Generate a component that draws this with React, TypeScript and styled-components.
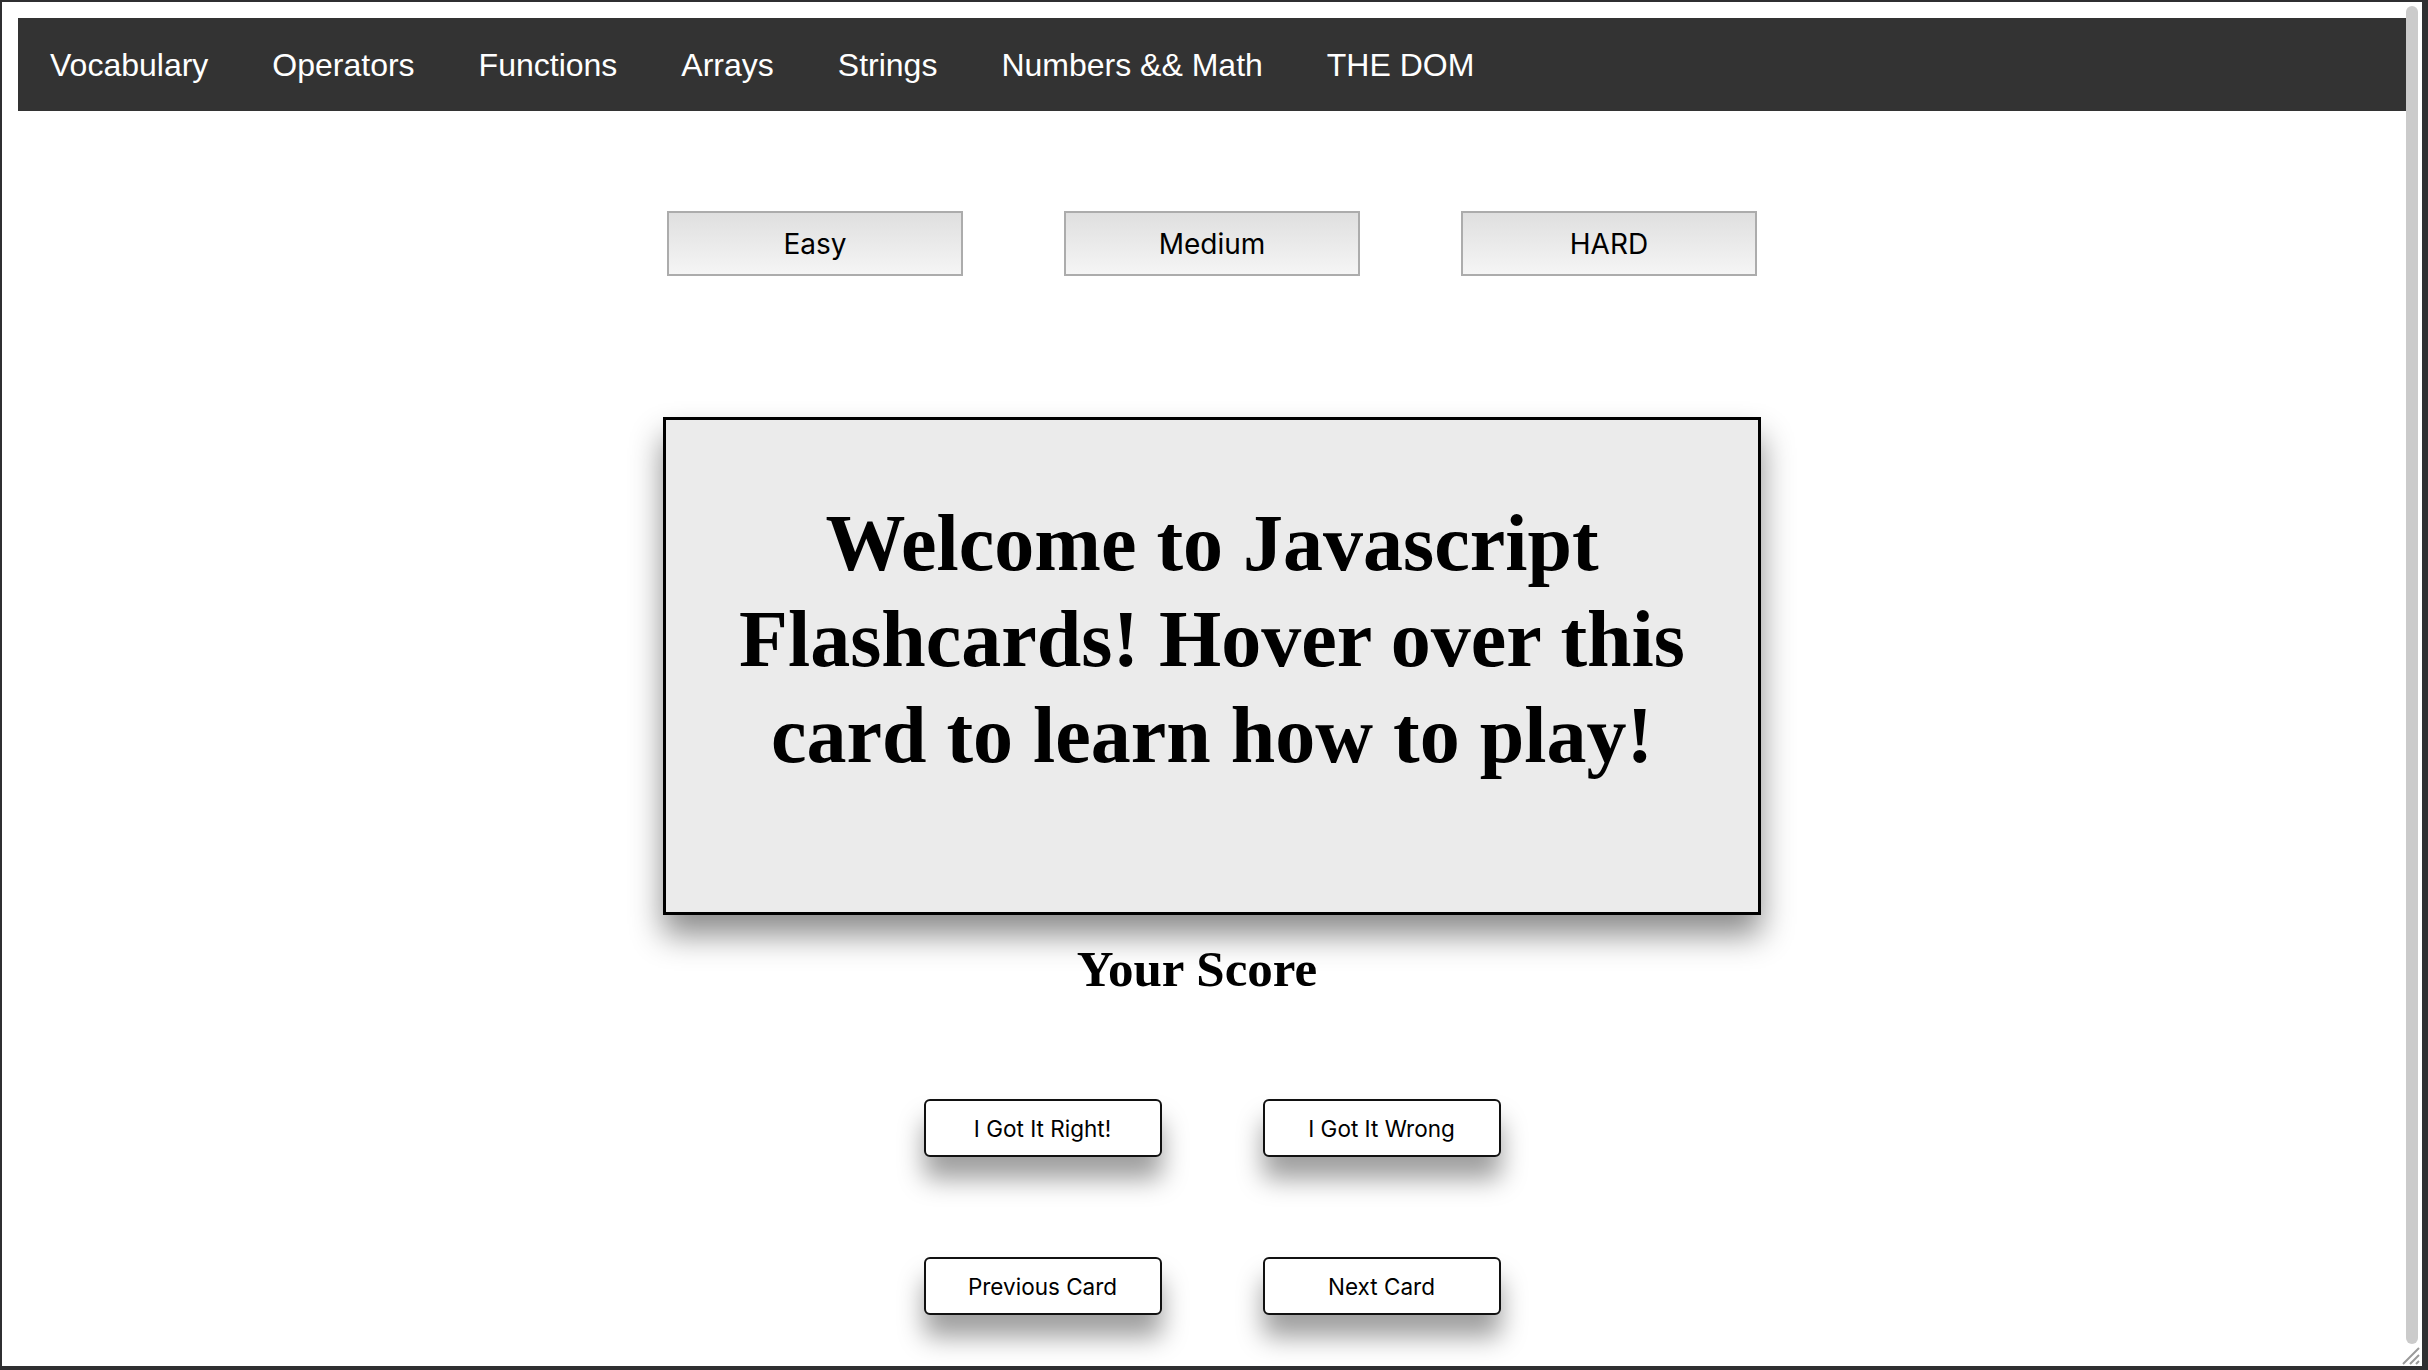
import React from 'react'
import styled, { createGlobalStyle } from 'styled-components'

const GlobalStyle = createGlobalStyle`
  html, body {
    margin: 0;
    padding: 0;
    width: 2428px;
    height: 1370px;
    overflow: hidden;
    background: #2f2f31;
  }

  * {
    box-sizing: border-box;
  }
`

const Frame = styled.div`
  width: 2428px;
  height: 1370px;
  padding: 2px 6px 4px 2px;
  background: #2f2f31;
`

const Viewport = styled.div`
  position: relative;
  display: flex;
  width: 100%;
  height: 100%;
  background: #fff;
  overflow: hidden;
`

const Content = styled.div`
  flex: 1;
  padding: 16px 0 0 16px;
  display: flex;
  flex-direction: column;
  align-items: center;
`

const NavBar = styled.ul`
  align-self: stretch;
  display: flex;
  margin: 0;
  padding: 0;
  list-style: none;
  background: #333;
`

const NavLink = styled.li`
  padding: 28px 32px 27px;
  font-family: 'Liberation Sans', Arial, sans-serif;
  font-size: 32px;
  line-height: 38px;
  color: #fff;
`

const LevelRow = styled.div`
  display: flex;
  gap: 101px;
  margin-top: 100px;
`

const LevelButton = styled.button`
  width: 296px;
  height: 65px;
  border: 2px solid #acacac;
  background: linear-gradient(to bottom, #dfdfdf, #f5f5f5);
  font-family: Inter, 'Liberation Sans', sans-serif;
  font-size: 28px;
  color: #000;
`

const Card = styled.div`
  width: 1098px;
  height: 498px;
  margin-top: 141px;
  padding: 75px 50px 0;
  border: 3px solid #000;
  background: #ebebeb;
  box-shadow: 0 20px 30px rgba(0, 0, 0, 0.45);
`

const CardText = styled.h1`
  margin: 0;
  font-family: 'Liberation Serif', 'Times New Roman', serif;
  font-weight: bold;
  font-size: 80px;
  line-height: 96px;
  text-align: center;
  color: #000;
`

const ScoreTitle = styled.h2`
  margin: 25px 30px 0 0;
  font-family: 'Liberation Serif', 'Times New Roman', serif;
  font-weight: bold;
  font-size: 51px;
  color: #000;
`

const ActionRow = styled.div<{ $top: number }>`
  display: flex;
  gap: 101px;
  margin-top: ${(p) => p.$top}px;
`

const ActionButton = styled.button`
  width: 238px;
  height: 58px;
  border: 2px solid #111;
  border-radius: 6px;
  background: #fff;
  box-shadow: 0 22px 26px rgba(0, 0, 0, 0.38);
  font-family: Inter, 'Liberation Sans', sans-serif;
  font-size: 22.5px;
  color: #000;
`

const ScrollTrack = styled.div`
  width: 16px;
  padding: 4px 4px 22px 0;
  display: flex;
`

const ScrollThumb = styled.div`
  flex: 1;
  border-radius: 6px;
  background: #cbcbcb;
`

const Grip = styled.svg`
  position: absolute;
  right: 2px;
  bottom: 1px;
`

const topics = [
  'Vocabulary',
  'Operators',
  'Functions',
  'Arrays',
  'Strings',
  'Numbers && Math',
  'THE DOM',
]

const App: React.FC = () => {
  return (
    <>
      <GlobalStyle />
      <Frame>
        <Viewport>
          <Content>
            <NavBar>
              {topics.map((t) => (
                <NavLink key={t}>{t}</NavLink>
              ))}
            </NavBar>
            <LevelRow>
              <LevelButton>Easy</LevelButton>
              <LevelButton>Medium</LevelButton>
              <LevelButton>HARD</LevelButton>
            </LevelRow>
            <Card>
              <CardText>
                Welcome to Javascript Flashcards! Hover over this card to learn
                how to play!
              </CardText>
            </Card>
            <ScoreTitle>Your Score</ScoreTitle>
            <ActionRow $top={101}>
              <ActionButton>I Got It Right!</ActionButton>
              <ActionButton>I Got It Wrong</ActionButton>
            </ActionRow>
            <ActionRow $top={100}>
              <ActionButton>Previous Card</ActionButton>
              <ActionButton>Next Card</ActionButton>
            </ActionRow>
          </Content>
          <ScrollTrack>
            <ScrollThumb />
          </ScrollTrack>
          <Grip width="22" height="22" viewBox="0 0 22 22">
            <path
              d="M21 5 L5 21 M21 12 L12 21 M21 18 L18 21"
              stroke="#9a9a9a"
              strokeWidth="2"
              fill="none"
            />
          </Grip>
        </Viewport>
      </Frame>
    </>
  )
}

export default App
